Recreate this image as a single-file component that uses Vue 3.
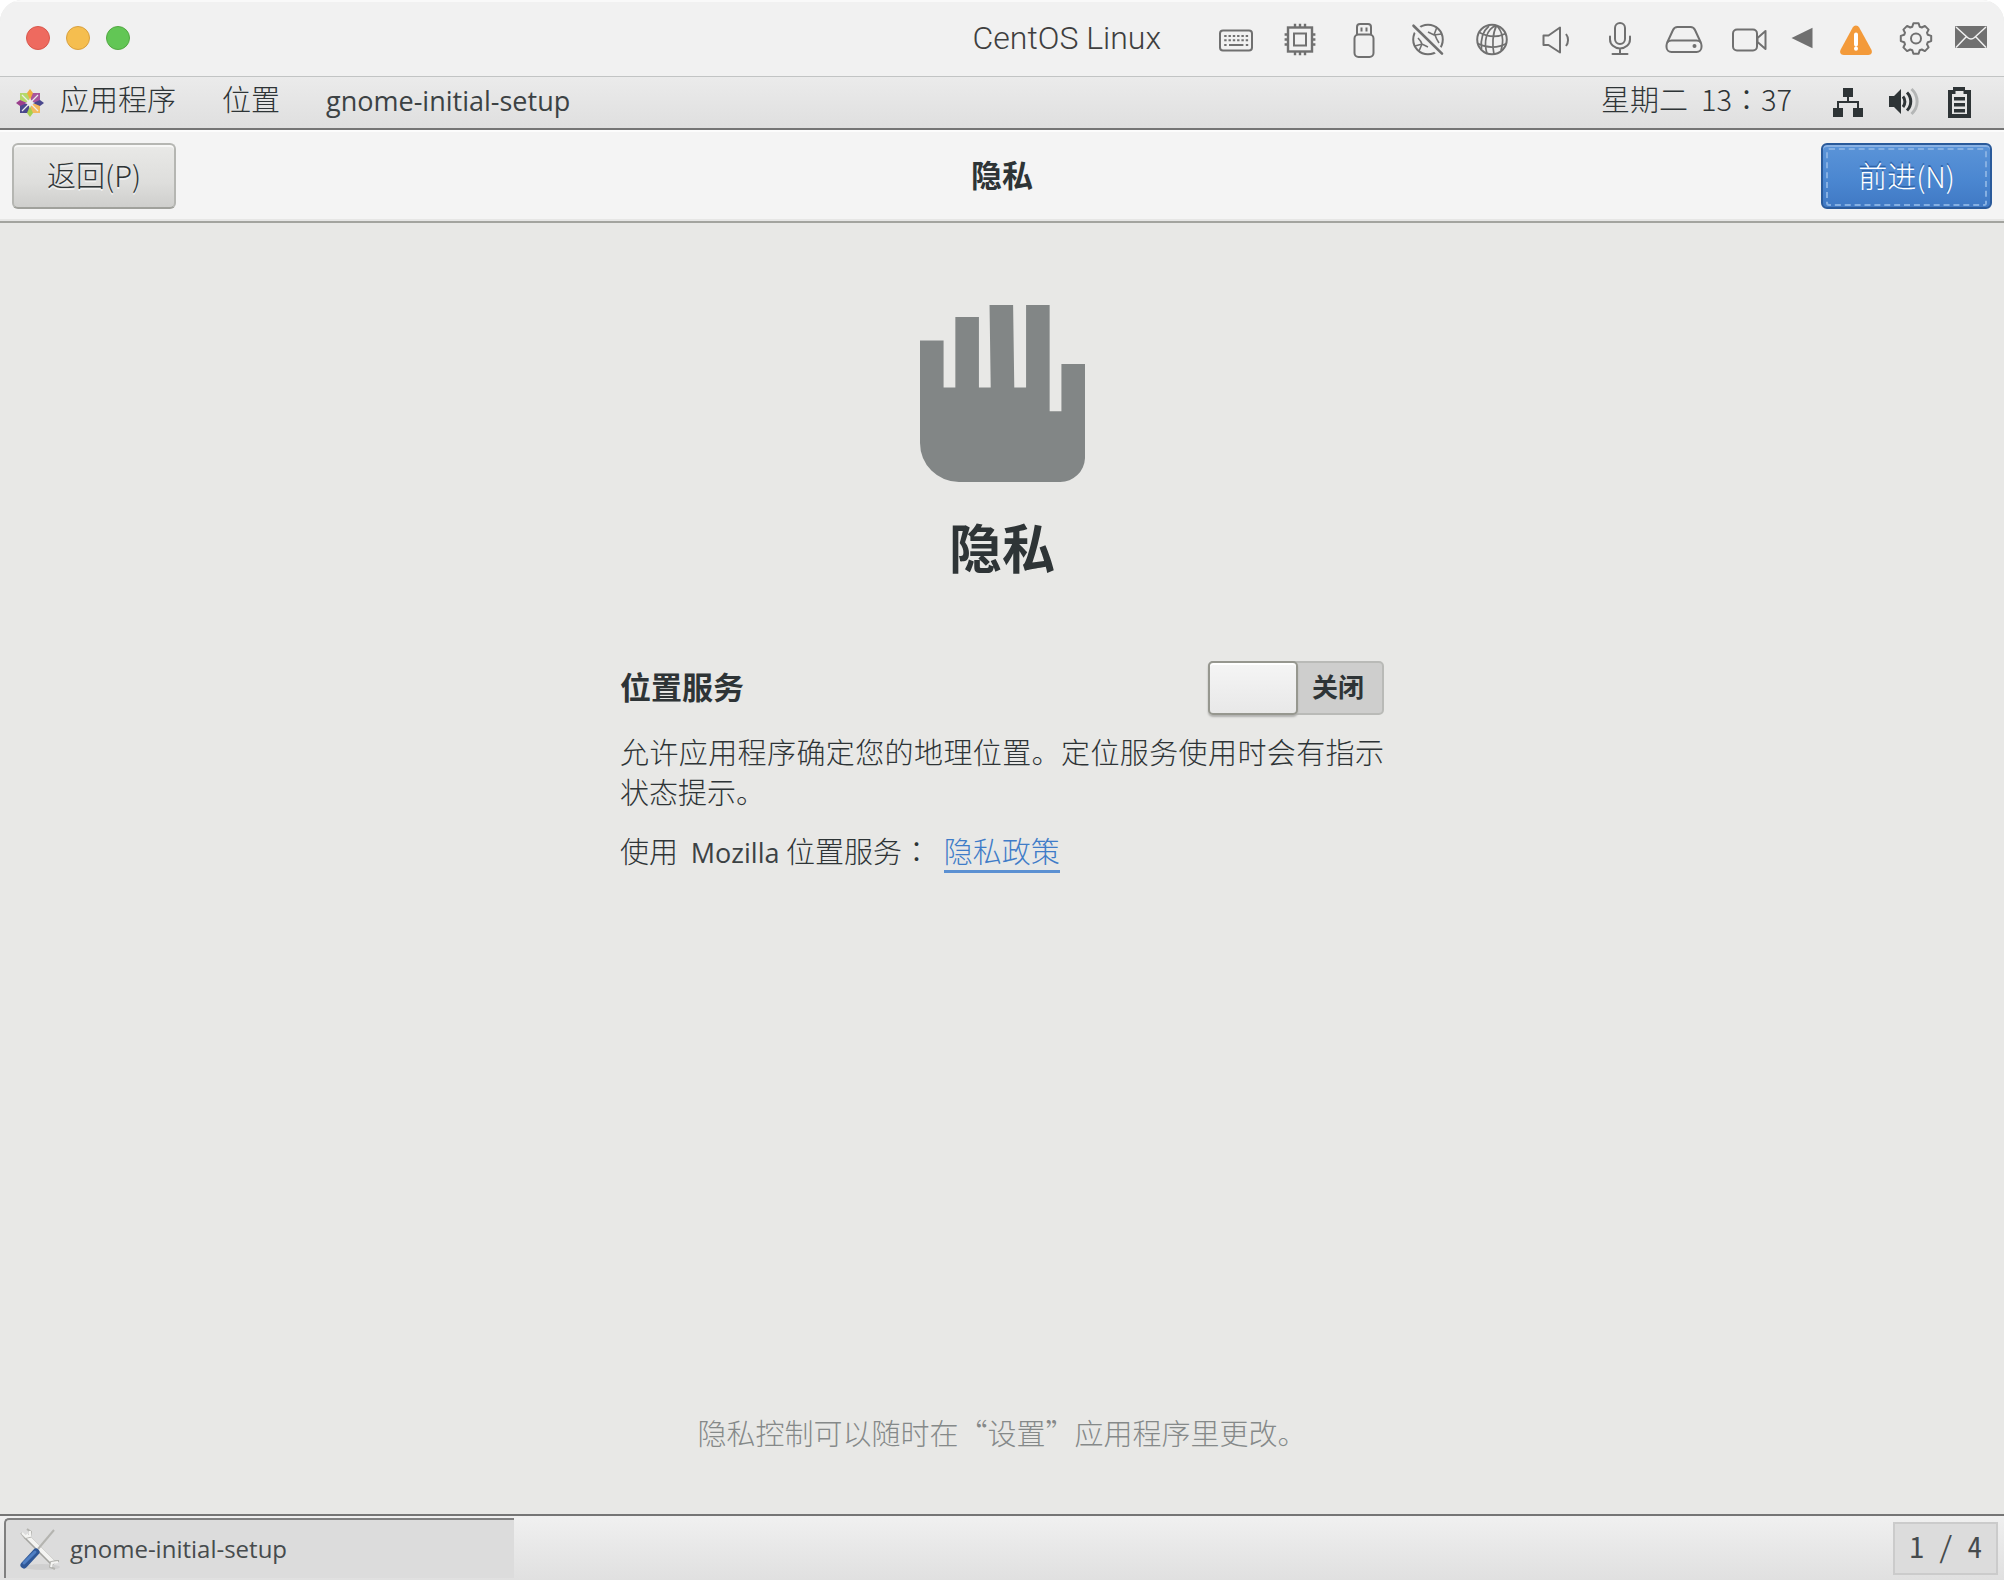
<script setup>
import { ref } from 'vue'

const locationEnabled = ref(false)

const teeth = 8
const gearPoints = Array.from({ length: teeth }, (_, i) => {
  const step = (Math.PI * 2) / teeth
  const centre = i * step - Math.PI / 2
  return [
    [12.4, -0.3],
    [15.4, -0.17],
    [15.4, 0.17],
    [12.4, 0.3]
  ]
    .map(([r, a]) => `${(20 + r * Math.cos(centre + a)).toFixed(1)},${(20.5 + r * Math.sin(centre + a)).toFixed(1)}`)
    .join(' ')
}).join(' ')
</script>

<template>
  <div class="window" lang="zh-CN">
    <header class="titlebar">
      <div class="lights">
        <button class="light red" aria-label="关闭窗口"></button>
        <button class="light amber" aria-label="最小化"></button>
        <button class="light green" aria-label="缩放"></button>
      </div>
      <h1 class="vm-name">CentOS Linux</h1>
      <div class="devices">
        <button class="device" aria-label="键盘">
          <svg viewBox="0 0 40 40">
            <rect x="4" y="12.5" width="32" height="20" rx="3" />
            <path stroke-dasharray="2.4 1.9" d="M8.2 18h24M8.2 22.3h24" />
            <path d="M8.2 27h2.4M13 27h14.4M29.8 27h2.4" />
          </svg>
        </button>
        <button class="device" aria-label="处理器">
          <svg viewBox="0 0 40 40">
            <rect x="8" y="9.5" width="24" height="24" stroke-width="2.4" />
            <rect x="14" y="15.5" width="12" height="12" />
            <path stroke-width="2.4" d="M15 9V5.8M20 9V5.8M25 9V5.8M15 34v3.2M20 34v3.2M25 34v3.2M8 16.5H4.6M8 21.5H4.6M8 26.5H4.6M32 16.5h3.4M32 21.5h3.4M32 26.5h3.4" />
          </svg>
        </button>
        <button class="device" aria-label="USB">
          <svg viewBox="0 0 40 40">
            <rect x="10.5" y="16.5" width="19" height="22.5" rx="4" />
            <path d="M13 16.5V9a3 3 0 0 1 3-3h8a3 3 0 0 1 3 3v7.5M17.500 9.5v4M22.5 9.5v4" />
          </svg>
        </button>
        <button class="device" aria-label="网络已断开">
          <svg viewBox="0 0 40 40">
            <circle cx="20" cy="21.5" r="14.8" />
            <path stroke-width="1.6" d="M20 14l6 3 7.500-1M26 17l3-8M27 17c1 3 2 5 4 8M7 28l7-2 6 3M14 26l-3 7M14 26c-1-3-2-4-4-6" />
            <path class="knockout" d="M3.3 5.7L36 38" />
            <path stroke-width="2.6" stroke-linecap="round" d="M5.5 7.7L34 35.600" />
          </svg>
        </button>
        <button class="device" aria-label="网络">
          <svg viewBox="0 0 40 40">
            <circle cx="20" cy="21.5" r="14.8" />
            <path stroke-width="1.7" d="M7.5 14.5c9 5 18 5 26.500 1M5.5 25.5c9 4.500 20 5 29 0M24 7.500c-10 4-12.500 16-9 28.500M24.500 7.500c-4 8-4.500 20-2.500 29M24.500 7.500c6 6 7.500 15 4.500 25M17 8c-6 5-8.500 14-7.500 23" />
          </svg>
        </button>
        <button class="device" aria-label="声音">
          <svg viewBox="0 0 40 40">
            <path stroke-linejoin="round" d="M7.500 17.500h5L24 9.500v25L12.500 27h-5zM30 16c2.700 3.500 2.700 8.500 0 12" />
          </svg>
        </button>
        <button class="device" aria-label="麦克风">
          <svg viewBox="0 0 40 40">
            <rect x="15" y="5" width="10" height="21" rx="5" />
            <path stroke-linecap="round" d="M10 18.500v3a10 9 0 0 0 20 0v-3M20 30.500V36M12.500 36h15" />
          </svg>
        </button>
        <button class="device" aria-label="硬盘">
          <svg viewBox="0 0 40 40">
            <path stroke-linejoin="round" d="M3 25l6-13c1-2.200 2-3 4.500-3h13c2.500 0 3.500.8 4.500 3l6 13" />
            <rect x="2.500" y="22.500" width="35" height="11.500" rx="5" />
            <circle class="solid" cx="30.500" cy="28" r="2" />
          </svg>
        </button>
        <button class="device" aria-label="摄像头">
          <svg viewBox="0 0 40 40">
            <rect x="5" y="11.500" width="24" height="21" rx="4" />
            <path stroke-linejoin="round" d="M29.500 20l8-7v18l-8-7z" />
          </svg>
        </button>
        <button class="device arrow" aria-label="收起">
          <svg viewBox="0 0 40 40"><path class="solid" d="M9.500 20L30.500 9.800v20.400z" /></svg>
        </button>
        <button class="device" aria-label="警告">
          <svg viewBox="0 0 40 40">
            <path class="warning" d="M16.700 9.400c1.500-2.700 5-2.700 6.500 0L35.300 31.500c1.400 2.700.2 5.500-3 5.500H7.700c-3.200 0-4.400-2.800-3-5.500z" />
            <path class="mark" d="M20 16.500v10M20 30.500v.2" />
          </svg>
        </button>
        <button class="device gear" aria-label="设置">
          <svg viewBox="0 0 40 40">
            <polygon :points="gearPoints" stroke-linejoin="round" />
            <circle cx="20" cy="20.500" r="5" />
          </svg>
        </button>
        <button class="device gear" aria-label="消息">
          <svg viewBox="0 0 40 40">
            <rect class="solid" x="4" y="8" width="32" height="22" rx="1" />
            <path class="fold" d="M5 9l11.500 10.500c2.500 2 4.500 2 7 0L35 9M5 29.500l10.500-11M35 29.500l-10.500-11" />
          </svg>
        </button>
      </div>
    </header>

    <nav class="panel">
      <div class="menus">
        <svg class="logo" viewBox="0 0 28 28" aria-hidden="true">
          <path fill="#b5d96a" d="M4 4h9v9H4z" />
          <path fill="#a9559d" d="M15 4h9v9h-9z" />
          <path fill="#f3b95e" d="M15 15h9v9h-9z" />
          <path fill="#4a488d" d="M4 15h9v9H4z" />
          <path fill="#f0ac3f" d="M14 0l3 4-3 7-3-7z" />
          <path fill="#4a488d" d="M28 14l-4 3-7-3 7-3z" />
          <path fill="#a5cf4c" d="M14 28l-3-4 3-7 3 7z" />
          <path fill="#9a3f8c" d="M0 14l4-3 7 3-7 3z" />
          <path stroke="#ececec" stroke-width="1.2" d="M6 6l16 16M22 6L6 22" />
          <circle cx="14" cy="14" r="3" fill="#ececec" />
        </svg>
        <button class="menu">应用程序</button>
        <button class="menu">位置</button>
        <button class="menu latin">gnome-initial-setup</button>
      </div>
      <div class="status">
        <time class="clock" datetime="13:37">星期二&nbsp; 13<span class="colon" lang="zh-TW">：</span>37</time>
        <svg viewBox="0 0 32 32" role="img" aria-label="网络">
          <path d="M11 1h10v9H11zM1 21h10v9H1zM21 21h10v9H21z" />
          <path class="wire" d="M16 9v6M6 21v-6h20v6" />
        </svg>
        <svg viewBox="0 0 32 32" role="img" aria-label="音量">
          <path d="M1 9h5l7-7v25l-7-7H1z" />
          <path class="wave" d="M15 9.500c2.500 3 2.500 7.500 0 10.500M19 5.500c5 5 5 13 0 18" />
          <path class="wave faint" d="M23.500 2c7.500 7 7.500 18 0 25" />
        </svg>
        <svg viewBox="0 0 32 32" role="img" aria-label="电池">
          <path fill-rule="evenodd" d="M9 0h12v3h6v28H4V3h5zM11.500 4v3H8v20h15V7h-3.500V4z" />
          <path d="M10 10h11v3.500H10zM10 16h11v3.500H10zM10 22h11v3.500H10z" />
        </svg>
      </div>
    </nav>

    <div class="headerbar">
      <div class="side"><button class="nav-button">返回(P)</button></div>
      <h2 class="page-name">隐私</h2>
      <div class="side end"><button class="nav-button next"><span class="focus">前进(N)</span></button></div>
    </div>

    <main class="page">
      <svg class="hand" viewBox="0 0 14 15" aria-hidden="true">
        <path d="M0 3h2v4h1V1h2v6h1L5.900 0h2L8 7h1V0h2v9h1V5h2v8a2.100 2.100 0 0 1-2.100 2H3.300A3.300 3.300 0 0 1 0 11.700z" />
      </svg>
      <h2 class="heading">隐私</h2>
      <section class="settings">
        <div class="setting">
          <label class="setting-name" for="location">位置服务</label>
          <label class="switch">
            <input id="location" v-model="locationEnabled" type="checkbox" role="switch" />
            <span class="switch-text">关闭</span>
          </label>
        </div>
        <p class="description">允许应用程序确定您的地理位置。定位服务使用时会有指示状态提示。</p>
        <p class="provider">使用&nbsp; <span class="latin">Mozilla</span> 位置服务<span class="colon" lang="zh-TW">：</span>&nbsp; <a href="#privacy">隐私政策</a></p>
      </section>
      <p class="note">隐私控制可以随时在“设置”应用程序里更改。</p>
    </main>

    <footer class="taskbar">
      <button class="task">
        <svg viewBox="0 0 44 44" aria-hidden="true">
          <ellipse cx="24" cy="40" rx="18" ry="3" fill="#cfcfcf" />
          <path d="M8 9l28 28" stroke="#a4a4a0" stroke-width="6" />
          <path d="M8 8l28 28" stroke="#f4f4f2" stroke-width="4" />
          <path d="M3 6l4 5 5-1 1-5-4-3M41 34l-3 0-5 1-1 5 5 2" fill="none" stroke="#b4b4b0" stroke-width="2" />
          <path d="M4 6l4 4 4-1 0-5M40 35l-6 1-1 4" fill="none" stroke="#f4f4f2" stroke-width="2" />
          <path d="M36 3L20 22" stroke="#b4b4b0" stroke-width="2" />
          <path d="M18 25L6 38" stroke="#2f5796" stroke-width="7" stroke-linecap="round" />
          <path d="M17 25L6 36" stroke="#4f7fc4" stroke-width="3" stroke-linecap="round" />
        </svg>
        <span class="task-name">gnome-initial-setup</span>
      </button>
      <button class="pager">1 / 4</button>
    </footer>
  </div>
</template>

<style>
body {
  margin: 0;
  background: #fff;
}
</style>

<style scoped>
.window {
  display: flex;
  flex-direction: column;
  min-height: 100vh;
  overflow: hidden;
  border-radius: 22px 22px 0 0;
  background: #e8e8e6;
  color: #2e3436;
  font-family: 'Noto Sans CJK SC', sans-serif;
  font-size: 29px;
  font-weight: 300;
  line-height: 40px;
}

button {
  margin: 0;
  padding: 0;
  border: 0;
  background: none;
  color: inherit;
  font: inherit;
}

h1,
h2,
p {
  margin: 0;
}

.latin {
  color: #3c4244;
  font-family: 'Open Sans', sans-serif;
  font-size: 27px;
  font-weight: 400;
}

.colon {
  font-family: 'Noto Sans CJK TC', sans-serif;
}

.titlebar {
  display: flex;
  align-items: center;
  height: 76px;
  padding: 0 6px 0 26px;
  border-bottom: 1px solid #c2c4c4;
  background: #f1f1f1;
  box-shadow: inset 0 2px #f9f9f9;
}

.lights {
  display: flex;
  gap: 16px;
}

.light {
  width: 24px;
  height: 24px;
  border: 1px solid;
  border-radius: 50%;
}

.red {
  border-color: #d9574c;
  background: #ee6a5f;
}

.amber {
  border-color: #d9a03e;
  background: #f5be4f;
}

.green {
  border-color: #52a842;
  background: #62c655;
}

.vm-name {
  margin-left: auto;
  color: #3f3f3f;
  font-family: Roboto, sans-serif;
  font-size: 32px;
  font-weight: 300;
}

.devices {
  display: flex;
  margin-left: 43px;
}

.device {
  display: flex;
  justify-content: center;
  width: 64px;
}

.device.arrow {
  width: 44px;
}

.device.gear {
  width: 55px;
}

.device svg {
  width: 40px;
  height: 40px;
  overflow: visible;
  fill: none;
  stroke: #707070;
  stroke-width: 2;
}

.device .solid {
  fill: #707070;
  stroke: none;
}

.device .knockout {
  stroke: #f1f1f1;
  stroke-width: 8;
}

.device .warning {
  fill: #f39a3a;
  stroke: none;
}

.device .mark {
  stroke: #fff;
  stroke-width: 4;
  stroke-linecap: round;
}

.device .fold {
  stroke: #f1f1f1;
  stroke-width: 1.5;
}

.panel {
  display: flex;
  justify-content: space-between;
  height: 51px;
  border-bottom: 2px solid #757575;
  background: linear-gradient(#ebebeb, #dfdfdf);
  line-height: 42px;
}

.menus {
  display: flex;
  align-items: baseline;
  padding: 0 16px;
}

.logo {
  align-self: center;
  width: 28px;
  height: 28px;
  margin-right: 16px;
}

.menu {
  margin-right: 46px;
}

.status {
  display: flex;
  align-items: center;
  gap: 24px;
  padding-right: 28px;
}

.clock {
  align-self: flex-start;
  margin-right: 16px;
}

.status svg {
  width: 32px;
  height: 32px;
  fill: #2e3436;
}

.status .wire {
  fill: none;
  stroke: #2e3436;
  stroke-width: 2;
}

.status .wave {
  fill: none;
  stroke: #2e3436;
  stroke-width: 3;
}

.status .faint {
  stroke: #b4b6b6;
}

.headerbar {
  display: flex;
  align-items: center;
  height: 91px;
  padding: 0 12px;
  border-bottom: 2px solid #a3a49f;
  background: #f4f4f4;
  box-shadow: inset 0 2px #fcfcfc, inset 0 -2px #e6e6e5;
}

.side {
  display: flex;
  flex: 1;
}

.end {
  justify-content: flex-end;
}

.page-name,
.setting-name {
  padding-bottom: 4px;
  font-size: 31px;
  font-weight: 700;
}

.nav-button {
  height: 66px;
  padding: 0 33px 4px;
  border: 2px solid #b5b6b2;
  border-bottom-color: #a0a19c;
  border-radius: 6px;
  background: linear-gradient(#e9e9e7, #dededc 60%, #cfcfcd);
  box-shadow: inset 0 2px #f7f7f6;
  text-shadow: 0 2px #f0f0ef;
}

.next {
  padding: 3px;
  border-color: #2a5a9a;
  background: linear-gradient(#5b94d8, #4a86d0 60%, #4079c4);
  box-shadow: inset 0 2px #8ab2e4;
  color: #fff;
  text-shadow: 0 -2px #2f64a8;
}

.focus {
  display: block;
  padding: 5px 30px 9px;
  border: 2px dashed #86b0e2;
  border-radius: 3px;
}

.page {
  display: flex;
  flex: 1;
  flex-direction: column;
  align-items: center;
  padding: 82px 24px 62px;
}

.hand {
  width: 165px;
  height: 177px;
  fill: #828686;
}

.heading {
  margin-top: 32px;
  font-size: 53px;
  font-weight: 700;
  line-height: 64px;
}

.settings {
  width: 100%;
  max-width: 764px;
  margin-top: 83px;
}

.setting {
  display: flex;
  align-items: center;
  justify-content: space-between;
}

.switch {
  display: flex;
  box-sizing: border-box;
  width: 176px;
  height: 54px;
  border: 2px solid #b9bab7;
  border-radius: 5px;
  background: #cececd;
}

.switch input {
  width: 90px;
  height: 54px;
  margin: -2px 0 0 -2px;
  border: 2px solid #96978f;
  border-radius: 5px;
  appearance: none;
  background: linear-gradient(#f5f5f5, #e8e8e8);
  box-shadow: inset 0 2px #fff, 0 2px 2px #b0b0ae;
}

.switch-text {
  flex: 1;
  align-self: center;
  padding: 0 4px 4px 0;
  font-size: 26px;
  font-weight: 700;
  text-align: center;
}

.description {
  margin-top: 16px;
  text-align: justify;
}

.provider {
  margin-top: 19px;
}

.provider a {
  display: inline-block;
  border-bottom: 3px solid #5b90d2;
  color: #3f7cc8;
  text-decoration: none;
}

.note {
  margin-top: auto;
  color: #858989;
}

.taskbar {
  display: flex;
  align-items: center;
  justify-content: space-between;
  height: 64px;
  padding: 0 6px 0 4px;
  border-top: 2px solid #757575;
  background: linear-gradient(#f0f0f0, #e0e0e0);
}

.task {
  display: flex;
  align-items: center;
  gap: 8px;
  width: 510px;
  height: 60px;
  padding: 0 12px;
  border-top: 2px solid #808080;
  border-left: 2px solid #808080;
  border-radius: 5px 0 0 0;
  background: #dcdcdc;
}

.task svg {
  width: 44px;
  height: 44px;
}

.task-name {
  color: #464b4d;
  font-family: 'Open Sans', sans-serif;
  font-size: 24px;
  font-weight: 400;
}

.pager {
  height: 53px;
  padding: 0 14px 6px;
  border: 2px solid #cbcbcb;
  background: #dcdcdc;
  color: #464b4d;
  font-family: 'Noto Sans Mono CJK SC', 'DejaVu Sans Mono', monospace;
}
</style>
